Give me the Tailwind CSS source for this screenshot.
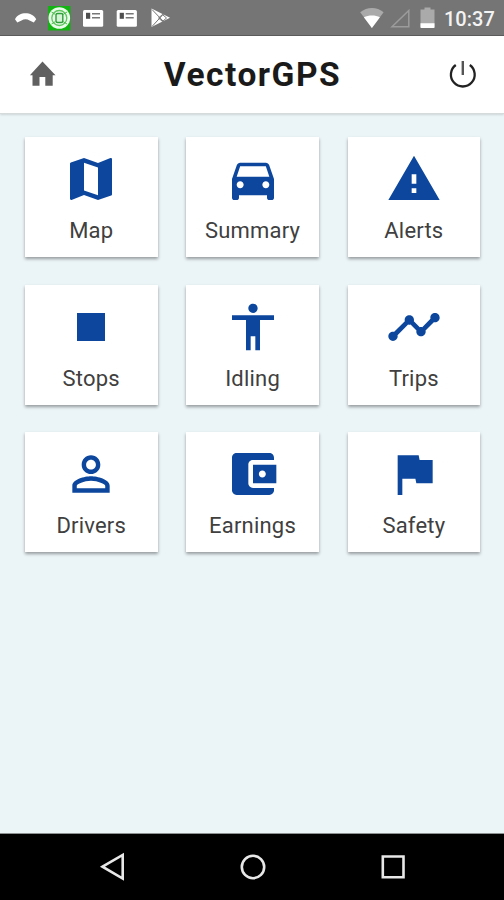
<!DOCTYPE html>
<html lang="en">
<head>
<meta charset="utf-8">
<title>VectorGPS</title>
<script src="https://cdn.jsdelivr.net/npm/@tailwindcss/browser@4"></script>
</head>
<body class="w-[504px] h-[900px] flex flex-col overflow-hidden bg-[#ebf4f7] font-['Roboto',sans-serif]">
  <div class="h-9 shrink-0 bg-[#757575] border-b border-[#5c5c5c] flex items-center justify-between pl-[14px] pr-[10px]">
    <svg class="w-[160px] h-[35px]" viewBox="14 0 160 35">
      <path d="M15 19.200C19 11.300 32 11.300 36.200 19.200L33.800 22.600L29.600 20.600C27 18.800 24 18.800 21.500 20.600L17.300 22.600Z" fill="#fff"/>
      <path d="M48 6h22.500v24.500H48z" fill="#12b312"/>
      <circle cx="59.300" cy="18" r="10.800" fill="#e9fbe9"/>
      <circle cx="59.300" cy="18" r="7.500" fill="none" stroke="#5fc75f" stroke-width="1.300"/>
      <rect x="56" y="13.500" width="6.800" height="9" rx="1.500" fill="#d5f3d5" stroke="#2f9e3b" stroke-width="1.400"/>
      <path d="M51.500 12l4 2.500M67 12l-4 2.500M51.500 24l4-2.500M67 24l-4-2.500" stroke="#4dbb4d" stroke-width="1"/>
      <g id="news">
        <rect x="83" y="10" width="20.200" height="16.800" rx="1.500" fill="#fff"/>
        <path d="M86 12.800h4.200v6H86z" fill="#4f4f4f"/>
        <path d="M92 13.800h8M92 17.800h8" stroke="#777" stroke-width="1.400"/>
      </g>
      <use href="#news" x="33.700"/>
      <path d="M151.500 8.500v18.500L170 17.800z" fill="#fff"/>
      <path d="M152 9.500l11.500 12M152 26.500l11.500-12.500M158.500 18l4-3.500 4 3.500-4 3.500z" fill="none" stroke="#757575" stroke-width="1"/>
    </svg>
    <div class="flex items-center">
      <svg class="w-[84px] h-[35px]" viewBox="358 0 84 35">
        <path d="M360.200 12.300C367 6.600 377 6.600 383.600 12.300L371.900 28Z" fill="#aaa"/>
        <path d="M363.900 17.200C368.500 14.800 375.500 14.800 379.900 17.200L371.900 28Z" fill="#fff"/>
        <path d="M392 26.800L408.800 10.500V26.800Z" fill="none" stroke="#9c9c9c" stroke-width="1.500"/>
        <path d="M420.500 9.500h4V7.500h6v2h4V28h-14z" fill="#aaa"/>
        <path d="M420.500 23.300h14v3.700q0 1-1 1h-12q-1 0-1-1z" fill="#fff"/>
      </svg>
      <span class="w-[52px] pl-[2px] pt-[3px] text-[20px] leading-6 font-medium text-[#f3f3f3] whitespace-nowrap">10:37</span>
    </div>
  </div>

  <header class="relative h-[78px] shrink-0 bg-white border-b border-[#d5dadb] shadow-[0_1px_2px_rgba(0,0,0,0.12)] flex items-center justify-between pl-[28px] pr-[26px]">
    <svg class="w-[29px] h-[30px]" viewBox="28 59.500 29 30"><path d="M42.500 61L29.900 74.700H32.500V85.200H39.500V76.500H45.300V85.200H52.700V74.700H55.500Z" fill="#606060"/></svg>
    <h1 class="text-[33.500px] leading-[40px] font-bold tracking-[1.500px] text-[#1a1a1a]">VectorGPS</h1>
    <svg class="w-[30px] h-[30px]" viewBox="448 59.500 30 30" fill="none">
      <path d="M455.800 64.500A11.900 11.900 0 1 0 469.800 64.500" stroke="#222" stroke-width="2.300"/>
      <path d="M462.800 60.500V74.500" stroke="#555" stroke-width="2.400"/>
    </svg>
  </header>

  <main class="flex-1 px-[25px] pt-[23px]">
    <div class="grid grid-cols-[repeat(3,132.500px)] gap-x-[28.800px] gap-y-[27.700px] text-[22px] leading-6 tracking-[0.200px] text-[#404040] fill-[#0c479d]">
      <div class="h-[120px] bg-white shadow-[0_2px_3px_rgba(0,0,0,0.36)] flex flex-col items-center pt-[14px]">
        <svg class="w-14 h-14" viewBox="0 0 24 24"><path d="M20.500 3l-.16.03L15 5.100 9 3 3.360 4.900c-.21.07-.36.25-.36.48V20.500c0 .28.22.5.5.5l.16-.03L9 18.900l6 2.100 5.640-1.900c.21-.07.36-.25.36-.48V3.500c0-.28-.22-.5-.5-.5zM15 19l-6-2.110V5l6 2.110V19z"/></svg>
        <span class="mt-3">Map</span>
      </div>
      <div class="h-[120px] bg-white shadow-[0_2px_3px_rgba(0,0,0,0.36)] flex flex-col items-center pt-[14px]">
        <svg class="w-14 h-14" viewBox="0 0 24 24"><path d="M18.920 6.010C18.720 5.420 18.160 5 17.500 5h-11c-.66 0-1.210.42-1.420 1.010L3 12v8c0 .55.45 1 1 1h1c.55 0 1-.45 1-1v-1h12v1c0 .55.45 1 1 1h1c.55 0 1-.45 1-1v-8l-2.080-5.990zM6.500 16c-.83 0-1.500-.67-1.500-1.500S5.670 13 6.500 13s1.500.67 1.500 1.500S7.330 16 6.500 16zm11 0c-.83 0-1.500-.67-1.500-1.500s.67-1.500 1.500-1.500 1.500.67 1.500 1.500-.67 1.500-1.500 1.500zM5 11l1.500-4.500h11L19 11H5z"/></svg>
        <span class="mt-3">Summary</span>
      </div>
      <div class="h-[120px] bg-white shadow-[0_2px_3px_rgba(0,0,0,0.36)] flex flex-col items-center pt-[14px]">
        <svg class="w-14 h-14" viewBox="0 0 24 24"><path d="M1 21h22L12 2 1 21zm12-3h-2v-2h2v2zm0-4h-2v-4h2v4z"/></svg>
        <span class="mt-3">Alerts</span>
      </div>
      <div class="h-[120px] bg-white shadow-[0_2px_3px_rgba(0,0,0,0.36)] flex flex-col items-center pt-[14px]">
        <svg class="w-14 h-14" viewBox="0 0 24 24"><path d="M6 6h12v12H6z"/></svg>
        <span class="mt-3">Stops</span>
      </div>
      <div class="h-[120px] bg-white shadow-[0_2px_3px_rgba(0,0,0,0.36)] flex flex-col items-center pt-[14px]">
        <svg class="w-14 h-14" viewBox="0 0 24 24"><path d="M12 2c1.100 0 2 .9 2 2s-.9 2-2 2-2-.9-2-2 .9-2 2-2zm9 7h-6v13h-2v-6h-2v6H9V9H3V7h18v2z"/></svg>
        <span class="mt-3">Idling</span>
      </div>
      <div class="h-[120px] bg-white shadow-[0_2px_3px_rgba(0,0,0,0.36)] flex flex-col items-center pt-[14px]">
        <svg class="w-14 h-14" viewBox="0 0 24 24"><path d="M23 8c0 1.100-.9 2-2 2-.18 0-.35-.02-.51-.07l-3.560 3.550c.05.16.07.34.07.52 0 1.100-.9 2-2 2s-2-.9-2-2c0-.18.02-.36.07-.52l-2.550-2.550c-.16.05-.34.07-.52.07s-.36-.02-.52-.07l-4.550 4.560c.05.16.07.33.07.51 0 1.100-.9 2-2 2s-2-.9-2-2 .9-2 2-2c.18 0 .35.02.51.07l4.560-4.550C8.020 9.360 8 9.180 8 9c0-1.100.9-2 2-2s2 .9 2 2c0 .18-.02.36-.07.52l2.550 2.550c.16-.05.34-.07.52-.07s.36.02.52.07l3.550-3.560C19.020 8.350 19 8.180 19 8c0-1.100.9-2 2-2s2 .9 2 2z"/></svg>
        <span class="mt-3">Trips</span>
      </div>
      <div class="h-[120px] bg-white shadow-[0_2px_3px_rgba(0,0,0,0.36)] flex flex-col items-center pt-[14px]">
        <svg class="w-14 h-14" viewBox="0 0 24 24"><path d="M12 5.900c1.160 0 2.100.94 2.100 2.100s-.94 2.100-2.100 2.100S9.900 9.160 9.900 8s.94-2.100 2.100-2.100m0 9c2.970 0 6.100 1.460 6.100 2.100v1.100H5.900V17c0-.64 3.130-2.100 6.100-2.100M12 4C9.790 4 8 5.790 8 8s1.790 4 4 4 4-1.790 4-4-1.790-4-4-4zm0 9c-2.670 0-8 1.340-8 4v3h16v-3c0-2.660-5.330-4-8-4z"/></svg>
        <span class="mt-3">Drivers</span>
      </div>
      <div class="h-[120px] bg-white shadow-[0_2px_3px_rgba(0,0,0,0.36)] flex flex-col items-center pt-[14px]">
        <svg class="w-14 h-14" viewBox="0 0 24 24"><path d="M21 18v1c0 1.100-.9 2-2 2H5c-1.110 0-2-.9-2-2V5c0-1.100.89-2 2-2h14c1.100 0 2 .9 2 2v1h-9c-1.110 0-2 .9-2 2v8c0 1.100.89 2 2 2h9zm-9-2h10V8H12v8zm4-2.500c-.83 0-1.500-.67-1.500-1.500s.67-1.500 1.500-1.500 1.500.67 1.500 1.500-.67 1.500-1.500 1.500z"/></svg>
        <span class="mt-3">Earnings</span>
      </div>
      <div class="h-[120px] bg-white shadow-[0_2px_3px_rgba(0,0,0,0.36)] flex flex-col items-center pt-[14px]">
        <svg class="w-14 h-14" viewBox="0 0 24 24"><path d="M14.400 6L14 4H5v17h2v-7h5.600l.4 2h7V6z"/></svg>
        <span class="mt-3">Safety</span>
      </div>
    </div>
  </main>

  <nav class="h-[67px] shrink-0 bg-black border-t border-[#8d9192] flex items-center justify-center">
    <svg class="w-[340px] h-[66px]" viewBox="82 834 340 66" fill="none" stroke="#e8e8e8" stroke-width="2.600">
      <path d="M102.500 866.700L122.700 855V878.500Z"/>
      <circle cx="253" cy="867" r="11.200"/>
      <path d="M382.800 856.500h20.700v20.700h-20.700z"/>
    </svg>
  </nav>
</body>
</html>
